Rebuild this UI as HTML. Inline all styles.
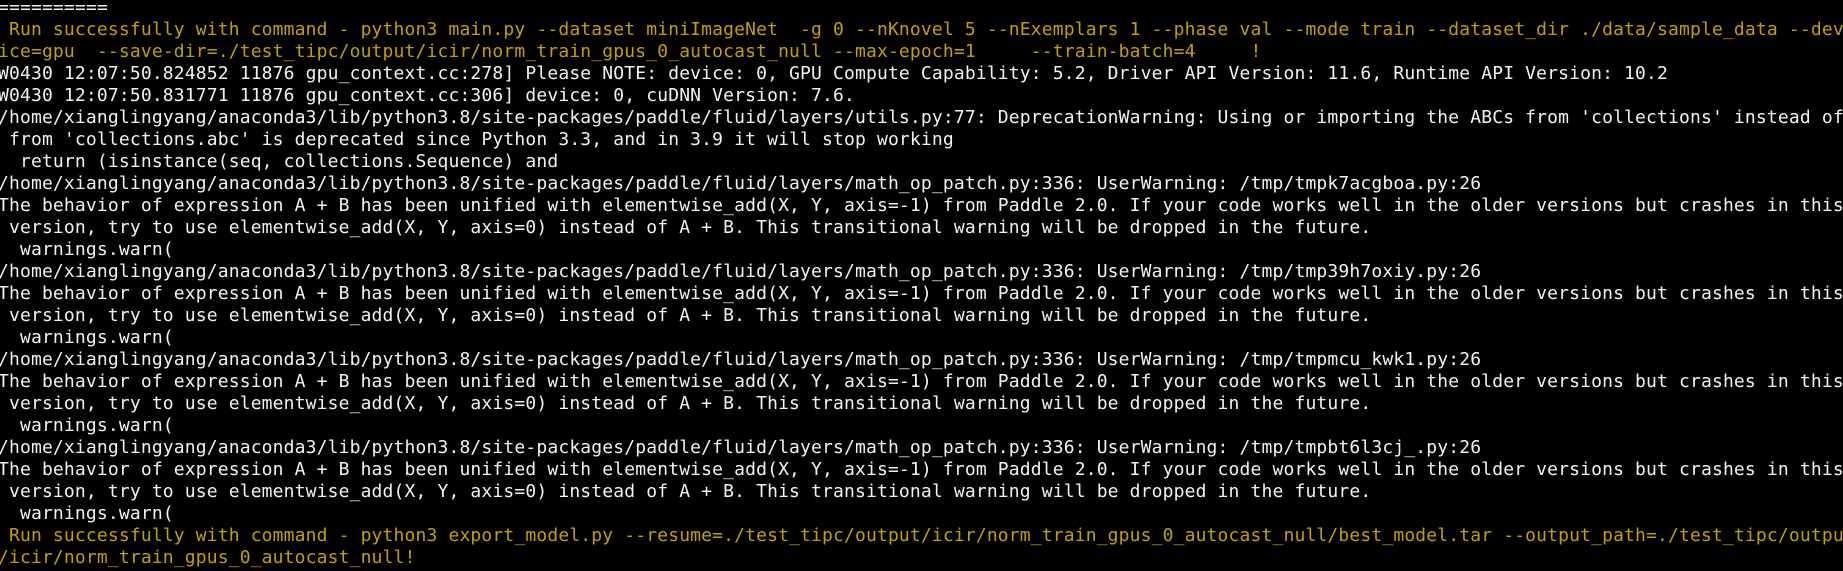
<!DOCTYPE html>
<html><head><meta charset="utf-8"><style>
html,body{margin:0;padding:0;background:#000;width:1843px;height:571px;overflow:hidden}
pre{margin:0;position:absolute;left:-2px;top:-3px;font-family:"DejaVu Sans Mono","Liberation Mono",monospace;font-size:18px;letter-spacing:0.15px;line-height:22px;color:#f2f2f2;white-space:pre}
.y{color:#c0a000}
</style></head><body><pre>==========
<span class="y"> Run successfully with command - python3 main.py --dataset miniImageNet  -g 0 --nKnovel 5 --nExemplars 1 --phase val --mode train --dataset_dir ./data/sample_data --dev
ice=gpu  --save-dir=./test_tipc/output/icir/norm_train_gpus_0_autocast_null --max-epoch=1     --train-batch=4     !</span>
W0430 12:07:50.824852 11876 gpu_context.cc:278] Please NOTE: device: 0, GPU Compute Capability: 5.2, Driver API Version: 11.6, Runtime API Version: 10.2
W0430 12:07:50.831771 11876 gpu_context.cc:306] device: 0, cuDNN Version: 7.6.
/home/xianglingyang/anaconda3/lib/python3.8/site-packages/paddle/fluid/layers/utils.py:77: DeprecationWarning: Using or importing the ABCs from 'collections' instead of
 from 'collections.abc' is deprecated since Python 3.3, and in 3.9 it will stop working
  return (isinstance(seq, collections.Sequence) and
/home/xianglingyang/anaconda3/lib/python3.8/site-packages/paddle/fluid/layers/math_op_patch.py:336: UserWarning: /tmp/tmpk7acgboa.py:26
The behavior of expression A + B has been unified with elementwise_add(X, Y, axis=-1) from Paddle 2.0. If your code works well in the older versions but crashes in this
 version, try to use elementwise_add(X, Y, axis=0) instead of A + B. This transitional warning will be dropped in the future.
  warnings.warn(
/home/xianglingyang/anaconda3/lib/python3.8/site-packages/paddle/fluid/layers/math_op_patch.py:336: UserWarning: /tmp/tmp39h7oxiy.py:26
The behavior of expression A + B has been unified with elementwise_add(X, Y, axis=-1) from Paddle 2.0. If your code works well in the older versions but crashes in this
 version, try to use elementwise_add(X, Y, axis=0) instead of A + B. This transitional warning will be dropped in the future.
  warnings.warn(
/home/xianglingyang/anaconda3/lib/python3.8/site-packages/paddle/fluid/layers/math_op_patch.py:336: UserWarning: /tmp/tmpmcu_kwk1.py:26
The behavior of expression A + B has been unified with elementwise_add(X, Y, axis=-1) from Paddle 2.0. If your code works well in the older versions but crashes in this
 version, try to use elementwise_add(X, Y, axis=0) instead of A + B. This transitional warning will be dropped in the future.
  warnings.warn(
/home/xianglingyang/anaconda3/lib/python3.8/site-packages/paddle/fluid/layers/math_op_patch.py:336: UserWarning: /tmp/tmpbt6l3cj_.py:26
The behavior of expression A + B has been unified with elementwise_add(X, Y, axis=-1) from Paddle 2.0. If your code works well in the older versions but crashes in this
 version, try to use elementwise_add(X, Y, axis=0) instead of A + B. This transitional warning will be dropped in the future.
  warnings.warn(
<span class="y"> Run successfully with command - python3 export_model.py --resume=./test_tipc/output/icir/norm_train_gpus_0_autocast_null/best_model.tar --output_path=./test_tipc/output
/icir/norm_train_gpus_0_autocast_null!</span></pre></body></html>
